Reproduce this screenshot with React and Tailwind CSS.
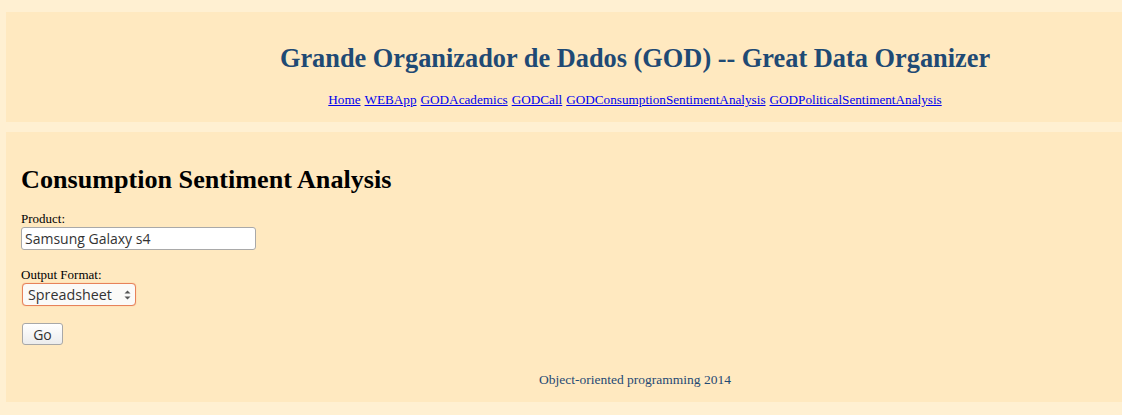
import React from 'react';

const links = [
  'Home',
  'WEBApp',
  'GODAcademics',
  'GODCall',
  'GODConsumptionSentimentAnalysis',
  'GODPoliticalSentimentAnalysis',
];

export default function App() {
  return (
    <div className="min-h-[415px] w-[1122px] overflow-hidden bg-[#fff0d2] pt-3 pl-1.5 font-['Liberation_Serif',serif]">
      <div className="flex h-[110px] flex-col items-center bg-[#ffe9c0] pl-[142px] pt-[32px]">
        <h1 className="text-[26.35px] font-bold leading-[30px] text-[#1f4a74]">
          Grande Organizador de Dados (GOD) -- Great Data Organizer
        </h1>
        <nav className="mt-[18px] flex gap-[4px] text-[13.2px] leading-[16px]">
          {links.map((l) => (
            <a key={l} href="#" className="text-[#0000ee] underline">
              {l}
            </a>
          ))}
        </nav>
      </div>

      <div className="mt-[10px] h-[270px] bg-[#ffe9c0] pl-[15px] pt-[33px]">
        <h2 className="text-[26.15px] font-bold leading-[30px] text-black">Consumption Sentiment Analysis</h2>

        <div className="mt-[16px] text-[13px] leading-[15px] text-black">Product:</div>
        <div className="mt-[1px] flex h-[23px] w-[235px] items-center rounded-[3px] border border-[#a9a9a9] bg-white px-[3px] font-['Open_Sans',sans-serif] text-[14px] text-[#333]">
          Samsung Galaxy s4
        </div>

        <div className="mt-[17px] text-[13px] leading-[15px] text-black">Output Format:</div>
        <div className="ml-[1px] mt-[1px] flex h-[23px] w-[114px] items-center justify-between rounded-[4px] border border-[#e7825a] bg-[#fbfaf8] pl-[5px] pr-[4px] font-['Open_Sans',sans-serif] text-[14.3px] text-[#333] shadow-[0_0_1px_#f0a070]">
          <span>Spreadsheet</span>
          <svg width="7" height="12" viewBox="0 0 7 12">
            <path d="M0.5 4.5 L3.5 1.5 L6.5 4.5 Z" fill="#555" />
            <path d="M0.5 7.5 L3.5 10.5 L6.5 7.5 Z" fill="#555" />
          </svg>
        </div>

        <button className="ml-[1px] mt-[17px] flex h-[22px] w-[41px] items-center justify-center rounded-[3px] border border-[#a8a8a8] bg-gradient-to-b from-white to-[#ececec] font-['Open_Sans',sans-serif] text-[14px] text-[#333]">
          Go
        </button>

        <div className="mt-[27px] pl-[127px] text-center text-[13.5px] leading-[16px] text-[#1f4a74]">
          Object-oriented programming 2014
        </div>
      </div>
    </div>
  );
}
